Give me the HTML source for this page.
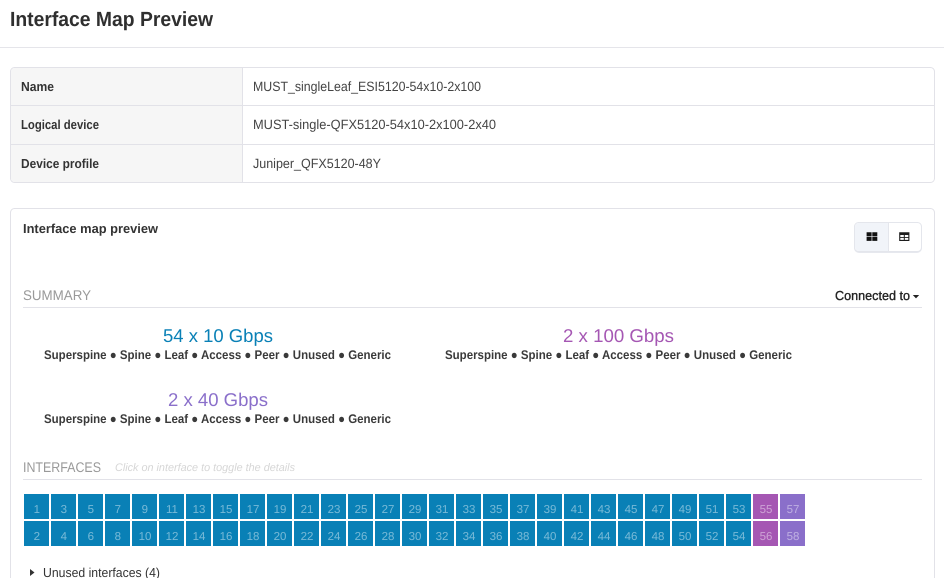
<!DOCTYPE html>
<html lang="en">
<head>
<meta charset="utf-8">
<title>Interface Map Preview</title>
<style>
html,body{margin:0;padding:0;background:#fff;width:944px;height:578px;overflow:hidden}
svg{display:block}
text{font-family:"Liberation Sans",sans-serif;text-rendering:geometricPrecision}
.b{font-weight:bold}
.lbl{font-size:13px;font-weight:bold;fill:#333}
.val{font-size:13.5px;fill:#444}
.sec{font-size:14px;fill:#999}
.big{font-size:18.5px}
.sub{font-size:12.5px;font-weight:bold;fill:#3a3a3a}
.n{font-size:11.5px;fill:#fff;fill-opacity:.45;text-anchor:middle}
.blue{fill:#0980b6}.pink{fill:#a557b3}.purp{fill:#8a6fca}
</style>
</head>
<body>
<svg width="944" height="578" viewBox="0 0 944 578" xmlns="http://www.w3.org/2000/svg">
<text x="10" y="26" class="b" font-size="20.5" fill="#2f2f2f" textLength="203" lengthAdjust="spacingAndGlyphs">Interface Map Preview</text>
<rect x="0" y="47" width="944" height="1" fill="#e5e5ea"/>

<rect x="10.5" y="67.5" width="924" height="115" rx="4" fill="#fff" stroke="#e2e2e8"/>
<path d="M242 68H15a4 4 0 0 0-4 4V178a4 4 0 0 0 4 4H242Z" fill="#f6f6f6"/>
<rect x="242" y="68" width="1" height="114" fill="#e2e2e8"/>
<rect x="11" y="105" width="923" height="1" fill="#e2e2e8"/>
<rect x="11" y="144" width="923" height="1" fill="#e2e2e8"/>
<text x="21" y="91" class="lbl" textLength="33" lengthAdjust="spacingAndGlyphs">Name</text>
<text x="21" y="129" class="lbl" textLength="78" lengthAdjust="spacingAndGlyphs">Logical device</text>
<text x="21" y="168" class="lbl" textLength="78" lengthAdjust="spacingAndGlyphs">Device profile</text>
<text x="253" y="91" class="val" textLength="228" lengthAdjust="spacingAndGlyphs">MUST_singleLeaf_ESI5120-54x10-2x100</text>
<text x="253" y="129" class="val" textLength="243" lengthAdjust="spacingAndGlyphs">MUST-single-QFX5120-54x10-2x100-2x40</text>
<text x="253" y="168" class="val" textLength="128" lengthAdjust="spacingAndGlyphs">Juniper_QFX5120-48Y</text>

<rect x="10.5" y="208.5" width="924" height="380" rx="4" fill="#fff" stroke="#e2e2e8"/>
<text x="23" y="233" class="lbl" textLength="135" lengthAdjust="spacingAndGlyphs">Interface map preview</text>

<rect x="854" y="223" width="68" height="30" rx="5" fill="#e6e8ee"/>
<rect x="854.5" y="222.5" width="67" height="29" rx="4" fill="#fff" stroke="#e4e6ec"/>
<path d="M888 223H859a4 4 0 0 0-4 4V247a4 4 0 0 0 4 4H888Z" fill="#f1f4f9"/>
<rect x="888" y="223" width="1" height="28" fill="#e4e6ec"/>
<path d="M866.6 232.2h5v4h-5ZM872.3 232.2h5v4h-5ZM866.6 236.9h5v4h-5ZM872.3 236.9h5v4h-5Z" fill="#111"/>
<path fill-rule="evenodd" d="M899.2 232.2h10.2v8.8h-10.2ZM900.3 235v2h3.5v-2ZM904.8 235v2h3.5v-2ZM900.3 237.9v2h3.5v-2ZM904.8 237.9v2h3.5v-2Z" fill="#1c1c1c"/>

<text x="23" y="300" class="sec" textLength="68" lengthAdjust="spacingAndGlyphs">SUMMARY</text>
<rect x="23" y="307" width="899" height="1" fill="#e2e2e8"/>
<text x="835" y="300" font-size="13" fill="#222" textLength="75" lengthAdjust="spacingAndGlyphs" stroke="#222" stroke-width=".35">Connected to</text>
<path d="M912.8 295h6.4l-3.2 3.4Z" fill="#222"/>

<text x="163" y="342" class="big blue" textLength="110" lengthAdjust="spacingAndGlyphs">54 x 10 Gbps</text>
<text x="44" y="359" class="sub" textLength="347" lengthAdjust="spacingAndGlyphs">Superspine ● Spine ● Leaf ● Access ● Peer ● Unused ● Generic</text>
<text x="563" y="342" class="big pink" textLength="111" lengthAdjust="spacingAndGlyphs">2 x 100 Gbps</text>
<text x="445" y="359" class="sub" textLength="347" lengthAdjust="spacingAndGlyphs">Superspine ● Spine ● Leaf ● Access ● Peer ● Unused ● Generic</text>
<text x="168" y="406" class="big purp" textLength="100" lengthAdjust="spacingAndGlyphs">2 x 40 Gbps</text>
<text x="44" y="423" class="sub" textLength="347" lengthAdjust="spacingAndGlyphs">Superspine ● Spine ● Leaf ● Access ● Peer ● Unused ● Generic</text>

<text x="23" y="472" class="sec" textLength="78" lengthAdjust="spacingAndGlyphs">INTERFACES</text>
<text x="115" y="471" font-size="11" font-style="italic" fill="#d6d6d6" textLength="180" lengthAdjust="spacingAndGlyphs">Click on interface to toggle the details</text>
<rect x="23" y="479" width="899" height="1" fill="#e2e2e8"/>

<g class="blue">
<rect x="24" y="494" width="25" height="25"/><rect x="24" y="521" width="25" height="25"/>
<rect x="51" y="494" width="25" height="25"/><rect x="51" y="521" width="25" height="25"/>
<rect x="78" y="494" width="25" height="25"/><rect x="78" y="521" width="25" height="25"/>
<rect x="105" y="494" width="25" height="25"/><rect x="105" y="521" width="25" height="25"/>
<rect x="132" y="494" width="25" height="25"/><rect x="132" y="521" width="25" height="25"/>
<rect x="159" y="494" width="25" height="25"/><rect x="159" y="521" width="25" height="25"/>
<rect x="186" y="494" width="25" height="25"/><rect x="186" y="521" width="25" height="25"/>
<rect x="213" y="494" width="25" height="25"/><rect x="213" y="521" width="25" height="25"/>
<rect x="240" y="494" width="25" height="25"/><rect x="240" y="521" width="25" height="25"/>
<rect x="267" y="494" width="25" height="25"/><rect x="267" y="521" width="25" height="25"/>
<rect x="294" y="494" width="25" height="25"/><rect x="294" y="521" width="25" height="25"/>
<rect x="321" y="494" width="25" height="25"/><rect x="321" y="521" width="25" height="25"/>
<rect x="348" y="494" width="25" height="25"/><rect x="348" y="521" width="25" height="25"/>
<rect x="375" y="494" width="25" height="25"/><rect x="375" y="521" width="25" height="25"/>
<rect x="402" y="494" width="25" height="25"/><rect x="402" y="521" width="25" height="25"/>
<rect x="429" y="494" width="25" height="25"/><rect x="429" y="521" width="25" height="25"/>
<rect x="456" y="494" width="25" height="25"/><rect x="456" y="521" width="25" height="25"/>
<rect x="483" y="494" width="25" height="25"/><rect x="483" y="521" width="25" height="25"/>
<rect x="510" y="494" width="25" height="25"/><rect x="510" y="521" width="25" height="25"/>
<rect x="537" y="494" width="25" height="25"/><rect x="537" y="521" width="25" height="25"/>
<rect x="564" y="494" width="25" height="25"/><rect x="564" y="521" width="25" height="25"/>
<rect x="591" y="494" width="25" height="25"/><rect x="591" y="521" width="25" height="25"/>
<rect x="618" y="494" width="25" height="25"/><rect x="618" y="521" width="25" height="25"/>
<rect x="645" y="494" width="25" height="25"/><rect x="645" y="521" width="25" height="25"/>
<rect x="672" y="494" width="25" height="25"/><rect x="672" y="521" width="25" height="25"/>
<rect x="699" y="494" width="25" height="25"/><rect x="699" y="521" width="25" height="25"/>
<rect x="726" y="494" width="25" height="25"/><rect x="726" y="521" width="25" height="25"/>
</g>
<g class="pink"><rect x="753" y="494" width="25" height="25"/><rect x="753" y="521" width="25" height="25"/></g>
<g class="purp"><rect x="780" y="494" width="25" height="25"/><rect x="780" y="521" width="25" height="25"/></g>

<g class="n">
<text x="36.8" y="513">1</text><text x="36.8" y="540">2</text>
<text x="63.8" y="513">3</text><text x="63.8" y="540">4</text>
<text x="90.8" y="513">5</text><text x="90.8" y="540">6</text>
<text x="117.8" y="513">7</text><text x="117.8" y="540">8</text>
<text x="144.8" y="513">9</text><text x="145" y="540">10</text>
<text x="172" y="513">11</text><text x="172" y="540">12</text>
<text x="199" y="513">13</text><text x="199" y="540">14</text>
<text x="226" y="513">15</text><text x="226" y="540">16</text>
<text x="253" y="513">17</text><text x="253" y="540">18</text>
<text x="280" y="513">19</text><text x="280" y="540">20</text>
<text x="307" y="513">21</text><text x="307" y="540">22</text>
<text x="334" y="513">23</text><text x="334" y="540">24</text>
<text x="361" y="513">25</text><text x="361" y="540">26</text>
<text x="388" y="513">27</text><text x="388" y="540">28</text>
<text x="415" y="513">29</text><text x="415" y="540">30</text>
<text x="442" y="513">31</text><text x="442" y="540">32</text>
<text x="469" y="513">33</text><text x="469" y="540">34</text>
<text x="496" y="513">35</text><text x="496" y="540">36</text>
<text x="523" y="513">37</text><text x="523" y="540">38</text>
<text x="550" y="513">39</text><text x="550" y="540">40</text>
<text x="577" y="513">41</text><text x="577" y="540">42</text>
<text x="604" y="513">43</text><text x="604" y="540">44</text>
<text x="631" y="513">45</text><text x="631" y="540">46</text>
<text x="658" y="513">47</text><text x="658" y="540">48</text>
<text x="685" y="513">49</text><text x="685" y="540">50</text>
<text x="712" y="513">51</text><text x="712" y="540">52</text>
<text x="739" y="513">53</text><text x="739" y="540">54</text>
<text x="766" y="513">55</text><text x="766" y="540">56</text>
<text x="793" y="513">57</text><text x="793" y="540">58</text>
</g>

<path d="M30 569l4.5 3.5l-4.5 3.5Z" fill="#333"/>
<text x="43" y="577" font-size="13" fill="#333" textLength="117" lengthAdjust="spacingAndGlyphs">Unused interfaces (4)</text>
</svg>
</body>
</html>
